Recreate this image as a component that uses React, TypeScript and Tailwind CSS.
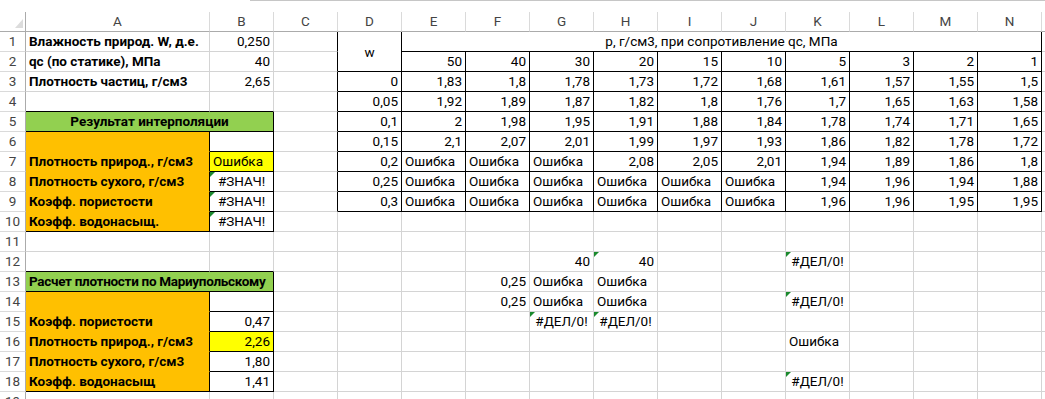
import React from 'react';

type Fill = 'g' | 'o' | 'y' | undefined;
type Align = 'l' | 'r' | 'c';
interface Cell {
  t?: string;
  a?: Align;
  b?: boolean;
  fill?: Fill;
  tri?: boolean;
  span?: string;
  mid?: boolean;
  tight?: boolean;
}

const LETTERS = ['A', 'B', 'C', 'D', 'E', 'F', 'G', 'H', 'I', 'J', 'K', 'L', 'M', 'N', ''];
const NROWS = 19;
const NCOLS = 15;

const data: Record<string, Cell> = {};
const set = (r: number, c: number, cell: Cell) => {
  data[`${r},${c}`] = cell;
};
const covered = new Set<string>();

// Left top
set(1, 0, { t: 'Влажность природ. W, д.е.', b: true });
set(1, 1, { t: '0,250', a: 'r' });
set(2, 0, { t: 'qc (по статике), МПа', b: true });
set(2, 1, { t: '40', a: 'r' });
set(3, 0, { t: 'Плотность частиц, г/см3', b: true });
set(3, 1, { t: '2,65', a: 'r' });

// Table header
set(1, 3, { t: 'w', a: 'c', mid: true, span: 'row-span-2' });
covered.add('2,3');
set(1, 4, { t: 'р, г/см3, при сопротивление qc, МПа', a: 'c', span: 'col-span-10' });
for (let c = 5; c <= 13; c++) covered.add(`1,${c}`);
['50', '40', '30', '20', '15', '10', '5', '3', '2', '1'].forEach((v, i) => set(2, 4 + i, { t: v, a: 'r' }));

const tableRows: string[][] = [
  ['0', '1,83', '1,8', '1,78', '1,73', '1,72', '1,68', '1,61', '1,57', '1,55', '1,5'],
  ['0,05', '1,92', '1,89', '1,87', '1,82', '1,8', '1,76', '1,7', '1,65', '1,63', '1,58'],
  ['0,1', '2', '1,98', '1,95', '1,91', '1,88', '1,84', '1,78', '1,74', '1,71', '1,65'],
  ['0,15', '2,1', '2,07', '2,01', '1,99', '1,97', '1,93', '1,86', '1,82', '1,78', '1,72'],
  ['0,2', 'Ошибка', 'Ошибка', 'Ошибка', '2,08', '2,05', '2,01', '1,94', '1,89', '1,86', '1,8'],
  ['0,25', 'Ошибка', 'Ошибка', 'Ошибка', 'Ошибка', 'Ошибка', 'Ошибка', '1,94', '1,96', '1,94', '1,88'],
  ['0,3', 'Ошибка', 'Ошибка', 'Ошибка', 'Ошибка', 'Ошибка', 'Ошибка', '1,96', '1,96', '1,95', '1,95'],
];
tableRows.forEach((row, i) => {
  row.forEach((v, j) => {
    set(3 + i, 3 + j, { t: v, a: v === 'Ошибка' ? 'l' : 'r' });
  });
});

// Block 1
set(5, 0, { t: 'Результат интерполяции', a: 'c', b: true, fill: 'g', span: 'col-span-2' });
covered.add('5,1');
set(6, 0, { fill: 'o' });
set(7, 0, { t: 'Плотность природ., г/см3', b: true, fill: 'o' });
set(7, 1, { t: 'Ошибка', fill: 'y' });
set(8, 0, { t: 'Плотность сухого, г/см3', b: true, fill: 'o' });
set(8, 1, { t: '#ЗНАЧ!', a: 'c', tri: true });
set(9, 0, { t: 'Коэфф. пористости', b: true, fill: 'o' });
set(9, 1, { t: '#ЗНАЧ!', a: 'c', tri: true });
set(10, 0, { t: 'Коэфф. водонасыщ.', b: true, fill: 'o' });
set(10, 1, { t: '#ЗНАЧ!', a: 'c', tri: true });

// Block 2
set(13, 0, { t: 'Расчет плотности по Мариупольскому', b: true, fill: 'g', span: 'col-span-2', tight: true });
covered.add('13,1');
set(14, 0, { fill: 'o' });
set(15, 0, { t: 'Коэфф. пористости', b: true, fill: 'o' });
set(15, 1, { t: '0,47', a: 'r' });
set(16, 0, { t: 'Плотность природ., г/см3', b: true, fill: 'o' });
set(16, 1, { t: '2,26', a: 'r', fill: 'y' });
set(17, 0, { t: 'Плотность сухого, г/см3', b: true, fill: 'o' });
set(17, 1, { t: '1,80', a: 'r' });
set(18, 0, { t: 'Коэфф. водонасыщ', b: true, fill: 'o' });
set(18, 1, { t: '1,41', a: 'r' });

// Loose cells
set(12, 6, { t: '40', a: 'r' });
set(12, 7, { t: '40', a: 'r', tri: true });
set(12, 10, { t: '#ДЕЛ/0!', a: 'c', tri: true });
set(13, 5, { t: '0,25', a: 'r' });
set(13, 6, { t: 'Ошибка' });
set(13, 7, { t: 'Ошибка' });
set(14, 5, { t: '0,25', a: 'r' });
set(14, 6, { t: 'Ошибка' });
set(14, 7, { t: 'Ошибка' });
set(14, 10, { t: '#ДЕЛ/0!', a: 'c', tri: true });
set(15, 6, { t: '#ДЕЛ/0!', a: 'c', tri: true });
set(15, 7, { t: '#ДЕЛ/0!', a: 'c', tri: true });
set(16, 10, { t: 'Ошибка' });
set(18, 10, { t: '#ДЕЛ/0!', a: 'c', tri: true });

function blackRight(r: number, c: number): boolean {
  if (r >= 1 && r <= 9 && c >= 2 && c <= 13) {
    if (r === 1 && c >= 4 && c <= 12) return false;
    return true;
  }
  if (c === 0 && r >= 6 && r <= 10) return true;
  if (c === 1 && r >= 5 && r <= 10) return true;
  if (c === 0 && r >= 14 && r <= 18) return true;
  if (c === 1 && r >= 13 && r <= 18) return true;
  return false;
}

function blackBottom(r: number, c: number): boolean {
  if (r >= 1 && r <= 9 && c >= 3 && c <= 13) {
    if (r === 1 && c === 3) return false;
    return true;
  }
  if ((r === 4 || r === 5 || r === 10) && (c === 0 || c === 1)) return true;
  if (r >= 6 && r <= 9 && c === 1) return true;
  if ((r === 12 || r === 13 || r === 18) && (c === 0 || c === 1)) return true;
  if (r >= 14 && r <= 17 && c === 1) return true;
  return false;
}

const R_CLS: Record<string, string> = {
  grid: 'border-r-[#d4d4d4]',
  k: 'border-r-black',
  g: 'border-r-[#92d050]',
  o: 'border-r-[#ffc000]',
  y: 'border-r-[#ffff00]',
};
const B_CLS: Record<string, string> = {
  grid: 'border-b-[#d4d4d4]',
  k: 'border-b-black',
  g: 'border-b-[#92d050]',
  o: 'border-b-[#ffc000]',
  y: 'border-b-[#ffff00]',
};
const FILL_CLS: Record<string, string> = {
  g: 'bg-[#92d050]',
  o: 'bg-[#ffc000]',
  y: 'bg-[#ffff00]',
};
const ALIGN_CLS: Record<Align, string> = {
  l: 'justify-start pl-[3px]',
  r: 'justify-end pr-[3px]',
  c: 'justify-center',
};

function Tri() {
  return (
    <svg className="absolute left-0 top-0" width="5" height="5" viewBox="0 0 5 5">
      <polygon points="0,0 5,0 0,5" fill="#1b8a2e" />
    </svg>
  );
}

export default function App() {
  const cells: React.ReactNode[] = [];

  cells.push(
    <div key="corner" className="relative border-r border-b border-r-[#ababab] border-b-[#ababab] bg-white">
      <svg className="absolute left-[15px] top-[7px]" width="8" height="9" viewBox="0 0 8 9">
        <polygon points="8,0 8,9 0,9" fill="#dcdcdc" />
      </svg>
    </div>
  );
  for (let c = 0; c < NCOLS; c++) {
    cells.push(
      <div
        key={`h${c}`}
        className="flex items-end justify-center border-r border-b border-r-[#dadada] border-b-[#ababab] bg-white pb-[1px] text-[13.5px] leading-[18px] text-[#444444]"
      >
        {LETTERS[c]}
      </div>
    );
  }

  for (let r = 1; r <= NROWS; r++) {
    cells.push(
      <div
        key={`rh${r}`}
        className="flex items-end justify-center border-r border-b border-r-[#ababab] border-b-[#dadada] bg-white pb-[1px] text-[13.5px] leading-[18px] text-[#444444]"
      >
        {r}
      </div>
    );
    for (let c = 0; c < NCOLS; c++) {
      const key = `${r},${c}`;
      if (covered.has(key)) continue;
      const cell: Cell = data[key] || {};
      let rc = c;
      let br = r;
      if (cell.span === 'col-span-2') rc = c + 1;
      if (cell.span === 'col-span-10') rc = c + 9;
      if (cell.span === 'row-span-2') br = r + 1;
      const rKey = blackRight(r, rc) ? 'k' : cell.fill ? cell.fill : 'grid';
      const bKey = blackBottom(br, c) ? 'k' : cell.fill ? cell.fill : 'grid';
      const cls = [
        'relative flex overflow-hidden whitespace-nowrap border-r border-b text-[13.5px] text-black',
        cell.mid ? 'items-center leading-[18px]' : 'items-end leading-[18px] pb-[1px]',
        R_CLS[rKey],
        B_CLS[bKey],
        cell.fill ? FILL_CLS[cell.fill] : 'bg-white',
        ALIGN_CLS[cell.a || 'l'],
        cell.b ? 'font-bold' : '',
        cell.tight ? 'tracking-[-0.3px]' : '',
        cell.span || '',
      ].join(' ');
      cells.push(
        <div key={key} className={cls}>
          {cell.tri ? <Tri /> : null}
          {cell.t ? <span>{cell.t}</span> : null}
        </div>
      );
    }
  }

  return (
    <div
      className="relative h-[399px] w-[1045px] overflow-hidden bg-white"
      style={{ fontFamily: 'Roboto, "Liberation Sans", sans-serif' }}
    >
      <div className="flex h-[12px]">
        <div className="w-[250px]" />
        <div className="h-[1px] flex-1 bg-[#c6c6c6]" />
      </div>
      <div className="grid grid-cols-[26px_184px_repeat(13,64px)_1fr] auto-rows-[20px]">{cells}</div>
    </div>
  );
}
